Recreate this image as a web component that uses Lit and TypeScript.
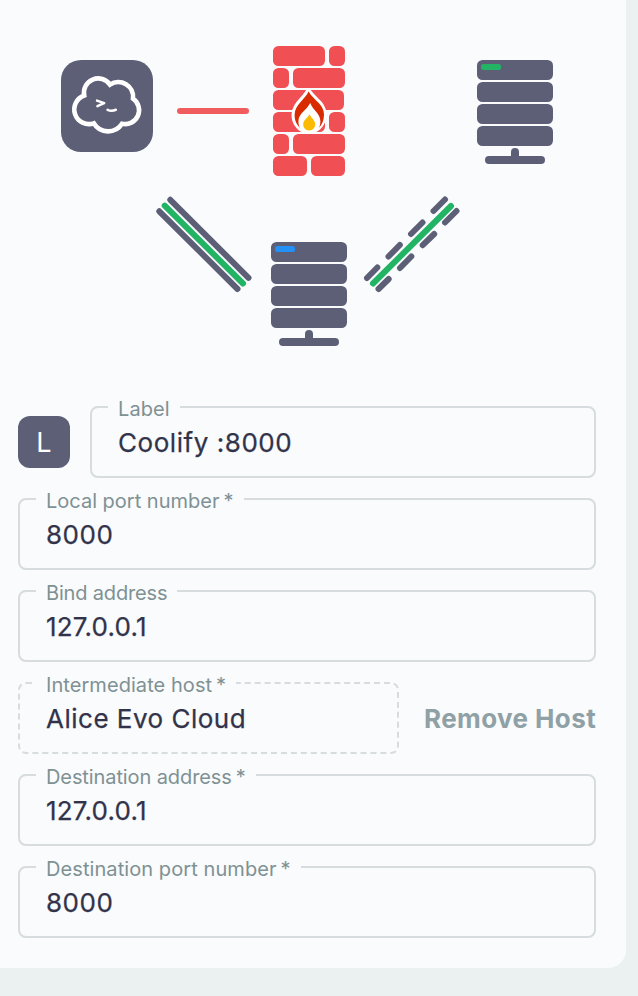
import { LitElement, html, css, svg, nothing } from "lit";
import { customElement, property } from "lit/decorators.js";

@customElement("outlined-field")
class OutlinedField extends LitElement {
  @property() label = "";
  @property() value = "";
  @property({ type: Boolean }) required = false;
  @property({ type: Boolean }) dashed = false;
  @property({ type: Number }) labelTrack = 0;
  @property({ type: Number }) valueTrack = 0.5;

  static styles = css`
    :host {
      display: block;
      position: relative;
      box-sizing: border-box;
      height: 72px;
      border: 2px solid #d7dcdf;
      border-radius: 8px;
      padding: 19px 26px 0;
    }
    :host([dashed]) {
      border-style: dashed;
    }
    .label {
      position: absolute;
      top: -13px;
      left: 16px;
      padding: 0 10px;
      background: #f9fbfd;
      color: #7f9193;
      font-size: 20px;
      line-height: 28px;
      white-space: pre;
    }
    .star {
      margin-left: 4px;
      letter-spacing: 0;
    }
    .value {
      color: #32334a;
      font-size: 26px;
      line-height: 32px;
      white-space: pre;
      -webkit-text-stroke: 0.25px #32334a;
    }
  `;

  render() {
    return html`<span class="label" style="letter-spacing:${this.labelTrack}px"
        >${this.label}${this.required ? html`<span class="star">*</span>` : nothing}</span
      >
      <div class="value" style="letter-spacing:${this.valueTrack}px">${this.value}</div>`;
  }
}

const server = (x: number, y: number, led: string) => svg`
  <g transform="translate(${x} ${y})" fill="#5d5f77">
    ${[0, 22, 44, 66].map((t) => svg`<rect y=${t} width="76" height="20" rx="5.5"/>`)}
    <rect x="4" y="4" width="20" height="6" rx="2.5" fill=${led}/>
    <rect x="34" y="88" width="8" height="14" rx="4"/>
    <rect x="8" y="96" width="60" height="8" rx="4"/>
  </g>`;

const bricks = [
  [273, 46, 52], [329, 46, 16],
  [273, 68, 16], [293, 68, 52],
  [273, 90, 40], [304, 90, 40],
  [273, 112, 52], [329, 112, 16],
  [273, 134, 16], [293, 134, 52],
  [273, 156, 34], [311, 156, 34],
];

@customElement("app-root")
class AppRoot extends LitElement {
  static styles = css`
    :host {
      display: block;
      box-sizing: border-box;
      height: 996px;
      overflow: hidden;
      padding-right: 12px;
      background: #ebf0f1;
      font-family: Inter, "Liberation Sans", sans-serif;
    }
    .card {
      height: 968px;
      background: #f9fbfd;
      border-bottom-right-radius: 18px;
    }
    .diagram {
      display: block;
      width: 626px;
      height: 406px;
    }
    .form {
      display: flex;
      flex-direction: column;
      gap: 20px;
      padding: 0 30px 0 18px;
    }
    .row {
      display: flex;
      align-items: center;
      gap: 20px;
    }
    .grow {
      flex: 1;
    }
    .badge {
      width: 52px;
      height: 52px;
      border-radius: 12px;
      background: #5d5f77;
      color: #fff;
      font-size: 27px;
      line-height: 53px;
      text-align: center;
    }
    .host {
      width: 381px;
      flex: none;
    }
    .host-row {
      gap: 25px;
    }
    .remove {
      border: 0;
      padding: 2px 0 0;
      background: none;
      color: #90a1a5;
      font: 700 26px/32px Inter, "Liberation Sans", sans-serif;
      letter-spacing: 0.4px;
      white-space: nowrap;
    }
  `;

  render() {
    return html`
      <main class="card">
        <svg class="diagram" viewBox="0 0 626 406" fill="none" stroke-linecap="round">
          <rect x="61" y="60" width="92" height="92" rx="20" fill="#5d5f77"/>
          <path
            d="M84.2 95.5A14.3 14.3 0 0 1 110 84.6A14.8 14.8 0 0 1 133 98.6A14 14 0 0 1 122 123.8A16.6 16.6 0 0 1 93.8 123.3A14.7 14.7 0 0 1 84.2 95.5Z"
            stroke="#fff" stroke-width="4.6" stroke-linejoin="miter"/>
          <path d="M97 100.6L104.2 103.2L97.4 106.2" stroke="#fff" stroke-width="2.4" stroke-linejoin="round"/>
          <path d="M107.6 109.8Q111.5 111.8 115.8 109.8" stroke="#fff" stroke-width="2.6"/>
          <path d="M180 111H246" stroke="#f15c5f" stroke-width="6"/>

          ${bricks.map(([x, y, w]) => svg`<rect x=${x} y=${y} width=${w} height="20" rx="5.5" fill="#f04f53"/>`)}
          <path
            d="M308.3 91C305 98.5 294 104 294 115C294 122.5 298.5 128.5 305 131H313C319.5 128.5 324 122 324 114.5C324 103.5 315 101 308.3 91Z"
            fill="#fff" stroke="#fff" stroke-width="5" stroke-linejoin="round"/>
          <path
            d="M308.6 91.5C305.5 99 294.6 104.5 294.6 115C294.6 121.5 297.2 125.5 300.8 128.5H318C322 125 324 120.5 324 114.5C324 104 314.5 101.5 308.6 91.5Z"
            fill="#d92b00"/>
          <path
            d="M310.2 103C306.5 110.5 298.4 113.5 298.4 121.5C298.4 126.5 300.7 130.5 304.5 132.5H314.5C318.3 130 320.4 126.5 320.4 121.5C320.4 113.5 313 110.5 310.2 103Z"
            fill="#fff"/>
          <path
            d="M309.5 114.2C307.8 118 303.2 119.8 303.2 124.3C303.2 128 305.8 130.4 309.2 130.4S315.2 128 315.2 124.3C315.2 119.8 311 118 309.5 114.2Z"
            fill="#fbbb03"/>

          ${server(477, 60, "#23b365")} ${server(271, 242, "#2391f5")}

          <g stroke="#5d5f77" stroke-width="6">
            <path d="M170.3 199.8L248.5 277.8M159.3 211.3L237.5 289"/>
            <path
              d="M445 199.5L433.5 211M422.5 222.5L411 234M399.8 245L388.5 256.5M377.3 267.5L367 278M456.5 211L445 222.5M434.2 234L422.7 245.2M411.3 256.5L400 268M388.7 279L378.5 289"/>
          </g>
          <g stroke="#23b365" stroke-width="6">
            <path d="M164.7 205.7L243 283.5M451 206L373 283.5"/>
          </g>
        </svg>

        <div class="form">
          <div class="row">
            <div class="badge">L</div>
            <outlined-field class="grow" label="Label" value="Coolify :8000" .labelTrack=${0.1} .valueTrack=${0.55}></outlined-field>
          </div>
          <outlined-field required label="Local port number" value="8000"></outlined-field>
          <outlined-field label="Bind address" value="127.0.0.1" .labelTrack=${-0.17} .valueTrack=${0.2}></outlined-field>
          <div class="row host-row">
            <outlined-field class="host" dashed required label="Intermediate host" value="Alice Evo Cloud" .labelTrack=${0.06}></outlined-field>
            <button class="remove">Remove Host</button>
          </div>
          <outlined-field required label="Destination address" value="127.0.0.1" .labelTrack=${-0.1} .valueTrack=${0.2}></outlined-field>
          <outlined-field required label="Destination port number" value="8000" .labelTrack=${0.08}></outlined-field>
        </div>
      </main>
    `;
  }
}
